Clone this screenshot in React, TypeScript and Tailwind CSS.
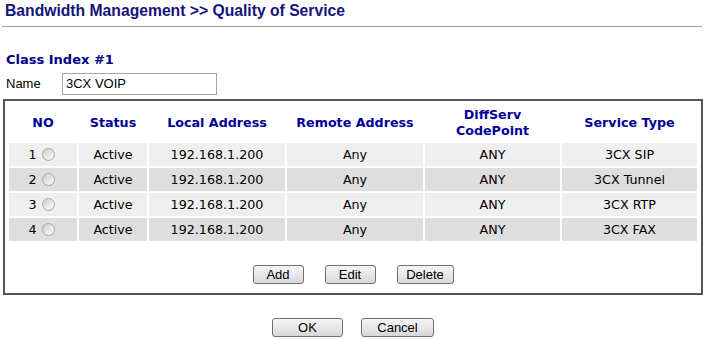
const rows = [
  { no: 1, local: "192.168.1.200", remote: "Any", dscp: "ANY", service: "3CX SIP" },
  { no: 2, local: "192.168.1.200", remote: "Any", dscp: "ANY", service: "3CX Tunnel" },
  { no: 3, local: "192.168.1.200", remote: "Any", dscp: "ANY", service: "3CX RTP" },
  { no: 4, local: "192.168.1.200", remote: "Any", dscp: "ANY", service: "3CX FAX" },
];

function Radio() {
  return (
    <span className="ml-[5px] mr-[3px] inline-block h-[13px] w-[13px] rounded-full border border-[#a9a9a9] bg-linear-to-br from-[#cdcdcd] via-[#e6e6e6] to-[#fafafa] align-[-2px]" />
  );
}

function Btn({ label, w }: { label: string; w: string }) {
  return (
    <button
      className={`${w} h-[19px] rounded-[3px] border border-[#707070] bg-linear-to-b from-[#f4f4f4] via-[#e9e9e9] to-[#d6d6d6] font-['Liberation_Sans',Arial,sans-serif] text-[13px] leading-none text-black`}
    >
      {label}
    </button>
  );
}

export default function App() {
  return (
    <div className="h-[339px] w-[706px] overflow-hidden bg-white font-['Liberation_Sans',Arial,sans-serif] text-black">
      <div className="pl-[5px] pt-[1px] text-[15.7px] font-bold leading-[20px] text-[#14147a]">
        Bandwidth Management &gt;&gt; Quality of Service
      </div>
      <div className="mx-[2px] mt-[5px] h-px w-[700px] bg-[#a0a0a0]" />

      <div className="mt-[25px] pl-[6px] font-['DejaVu_Sans',Verdana,sans-serif] text-[13px] font-bold leading-[16px] text-[#000088]">
        Class Index #1
      </div>

      <div className="mt-[5px] flex items-center pl-[6px]">
        <span className="w-[56px] text-[13px]">Name</span>
        <div className="flex h-[22px] w-[155px] items-center border border-[#a5a5a5] px-[3px] text-[13px]">
          3CX VOIP
        </div>
      </div>

      <div className="ml-[3px] mt-[4px] w-[700px] border-2 border-[#555555] px-[2px] pb-[9px]">
        <table className="w-[692px] table-fixed border-separate border-spacing-[2px] font-['DejaVu_Sans',Verdana,sans-serif] text-[12.7px]">
          <colgroup>
            <col className="w-[68px]" />
            <col className="w-[68px]" />
            <col className="w-[136px]" />
            <col className="w-[136px]" />
            <col className="w-[135px]" />
            <col className="w-[135px]" />
          </colgroup>
          <thead>
            <tr className="h-[38px] font-bold leading-[16px] text-[#000099]">
              <th className="p-0 pt-[2px]">NO</th>
              <th className="p-0 pt-[2px]">Status</th>
              <th className="p-0 pt-[2px]">Local Address</th>
              <th className="p-0 pt-[2px]">Remote Address</th>
              <th className="p-0 pt-[2px]">
                DiffServ
                <br />
                CodePoint
              </th>
              <th className="p-0 pt-[2px]">Service Type</th>
            </tr>
          </thead>
          <tbody>
            {rows.map((r, i) => (
              <tr
                key={r.no}
                className={`h-[23px] text-center leading-[16px] ${i % 2 === 0 ? "bg-[#efefef]" : "bg-[#dedede]"}`}
              >
                <td className="p-0">
                  {r.no}
                  <Radio />
                </td>
                <td className="p-0">Active</td>
                <td className="p-0">{r.local}</td>
                <td className="p-0">{r.remote}</td>
                <td className="p-0">{r.dscp}</td>
                <td className="p-0">{r.service}</td>
              </tr>
            ))}
          </tbody>
        </table>

        <div className="mt-[22px] flex justify-center gap-[21px]">
          <Btn label="Add" w="w-[51px]" />
          <Btn label="Edit" w="w-[51px]" />
          <Btn label="Delete" w="w-[57px]" />
        </div>
      </div>

      <div className="mt-[23px] flex justify-center gap-[18px]">
        <Btn label="OK" w="w-[71px]" />
        <Btn label="Cancel" w="w-[73px]" />
      </div>
    </div>
  );
}
